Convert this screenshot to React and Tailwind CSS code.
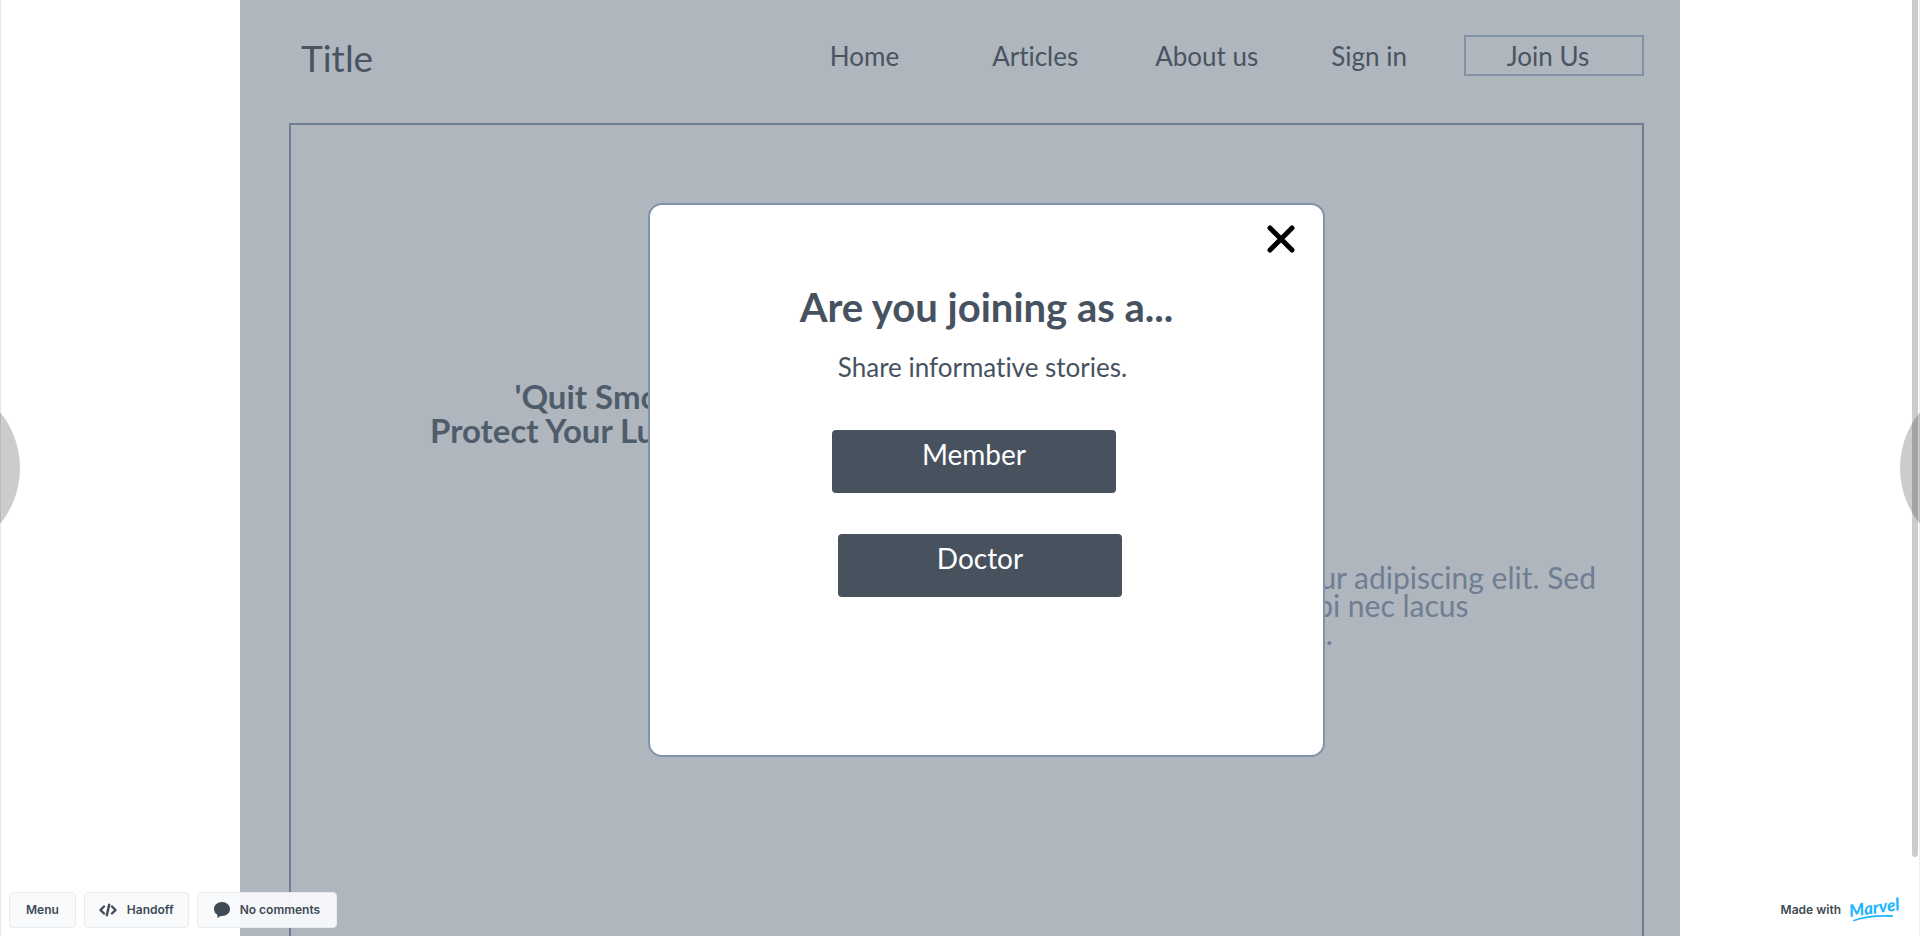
import React from "react";

function SiteHeader() {
  return (
    <header className="flex items-start justify-between pl-[61px] pr-9 h-[123px] text-[#4a5461]">
      <a href="#" className="mt-[36px] text-[37px] leading-[44px]">Title</a>
      <nav className="mt-[35px] flex items-start gap-[73px] text-[26px] leading-[43px]">
        <a href="#" className="mr-5">Home</a>
        <a href="#" className="mr-1">Articles</a>
        <a href="#">About us</a>
        <a href="#" className="-mr-4">Sign in</a>
        <button type="button" className="flex h-[41px] w-[180px] items-center justify-center border-2 border-[#8292a8] pr-3 pt-0.5">
          Join Us
        </button>
      </nav>
    </header>
  );
}

function Hero() {
  return (
    <section className="ml-[49px] mr-9 grow border-2 border-b-0 border-[#6f7e92]">
      <h1 className="ml-[139px] w-[376px] pt-[254px] text-center text-[33px] font-bold leading-[34px] text-[#4f5d6b]">
        'Quit Smoking
        <br />
        <span className="whitespace-nowrap">Protect Your Lungs Today.'</span>
      </h1>
      <div className="mr-[46px] mt-[116px] flex justify-end text-3xl leading-7 text-[#6f7e92]">
        <p className="whitespace-nowrap">
          consectetur adipiscing elit. Sed
          <br />
          justo morbi nec lacus
          <br />
          convallis a.
        </p>
      </div>
    </section>
  );
}

function JoinDialog() {
  return (
    <div className="absolute inset-0 flex items-start justify-center pl-[53px] pt-[203px]">
      <div
        role="dialog"
        aria-labelledby="join-title"
        className="flex w-[677px] flex-col rounded-[14px] border-2 border-[#8292a8] bg-white pb-[158px] text-[#475260]"
      >
        <button type="button" aria-label="Close" className="mr-[27px] mt-[19px] self-end">
          <svg width="30" height="30" viewBox="0 0 30 30" fill="none" stroke="#000" strokeWidth="5" strokeLinecap="round">
            <path d="M4 4 26 26M26 4 4 26" />
          </svg>
        </button>
        <h2 id="join-title" className="mt-[29px] text-center text-[40px] font-bold leading-[48px]">
          Are you joining as a...
        </h2>
        <p className="mt-5 pr-2 text-center text-[26px] leading-8">Share informative stories.</p>
        <div className="mt-[47px] flex flex-col items-start gap-[41px] pl-[182px] text-[28px] leading-8 text-white">
          <button type="button" className="h-[63px] w-[284px] rounded bg-[#48525f] pb-4">
            Member
          </button>
          <button type="button" className="ml-1.5 h-[63px] w-[284px] rounded bg-[#48525f] pb-4">
            Doctor
          </button>
        </div>
      </div>
    </div>
  );
}

function ToolButton({ children, className }) {
  return (
    <button
      type="button"
      className={"flex h-9 items-center rounded border border-[#e8ecf0] bg-[#f9fafc]/95 text-xs font-semibold text-[#3f4a57] " + className}
    >
      {children}
    </button>
  );
}

function Toolbar() {
  return (
    <div className="absolute inset-x-0 bottom-0 flex items-end justify-between pb-2 pl-[9px] pr-[19px] font-[Inter,sans-serif]">
      <div className="flex gap-2">
        <ToolButton className="px-4">Menu</ToolButton>
        <ToolButton className="gap-2.5 px-[14px]">
          <svg width="18" height="14" viewBox="0 0 18 14" fill="none" stroke="#3f4a57" strokeWidth="2.400" strokeLinecap="round" strokeLinejoin="round">
            <path d="M5 3.500 1.500 7 5 10.500M13 3.500l3.500 3.500L13 10.500M10.200 1.800 7.800 12.200" />
          </svg>
          Handoff
        </ToolButton>
        <ToolButton className="gap-2.5 px-4">
          <svg width="16" height="16" viewBox="0 0 16 16" fill="#3f4a57">
            <path d="M8 0C3.600 0 0 3.100 0 7c0 2.500 1.300 4.600 3.400 5.800V16l3.400-2.100c.4.100.8.100 1.200.1 4.400 0 8-3.100 8-7s-3.600-7-8-7z" />
          </svg>
          No comments
        </ToolButton>
      </div>
      <a href="#" className="flex items-center gap-2 text-xs font-semibold text-[#3f4a57]">
        Made with
        <svg width="52" height="36" viewBox="0 0 52 36" role="img" aria-label="Marvel">
          <text x="1" y="25" transform="rotate(-8 1 25)" fill="#1fb6ff" fontFamily="Lato, sans-serif" fontSize="17" fontWeight="900" fontStyle="italic">
            Marvel
          </text>
          <path d="M5 28.500C15 24.500 30 23.500 43 24" fill="none" stroke="#1fb6ff" strokeWidth="1.800" strokeLinecap="round" />
        </svg>
      </a>
    </div>
  );
}

export default function App() {
  return (
    <div className="relative h-screen overflow-hidden bg-white font-[Lato,sans-serif] [font-variant-ligatures:no-common-ligatures]">
      <main className="mx-auto flex h-full w-3/4 flex-col bg-[#afb6be]">
        <SiteHeader />
        <Hero />
      </main>
      <JoinDialog />
      <div className="absolute left-0 top-0 h-full w-px bg-[#e8e8e8]" />
      <div className="absolute right-0 top-0 h-full w-px bg-[#f0f0f0]" />
      <div className="absolute right-0.5 top-0 h-[857px] w-1.5 rounded-b bg-black/20" />
      <button type="button" aria-label="Previous screen" className="absolute -left-[156px] top-1/2 size-44 -translate-y-1/2 rounded-full bg-black/20" />
      <button type="button" aria-label="Next screen" className="absolute -right-[156px] top-1/2 size-44 -translate-y-1/2 rounded-full bg-black/20" />
      <Toolbar />
    </div>
  );
}
